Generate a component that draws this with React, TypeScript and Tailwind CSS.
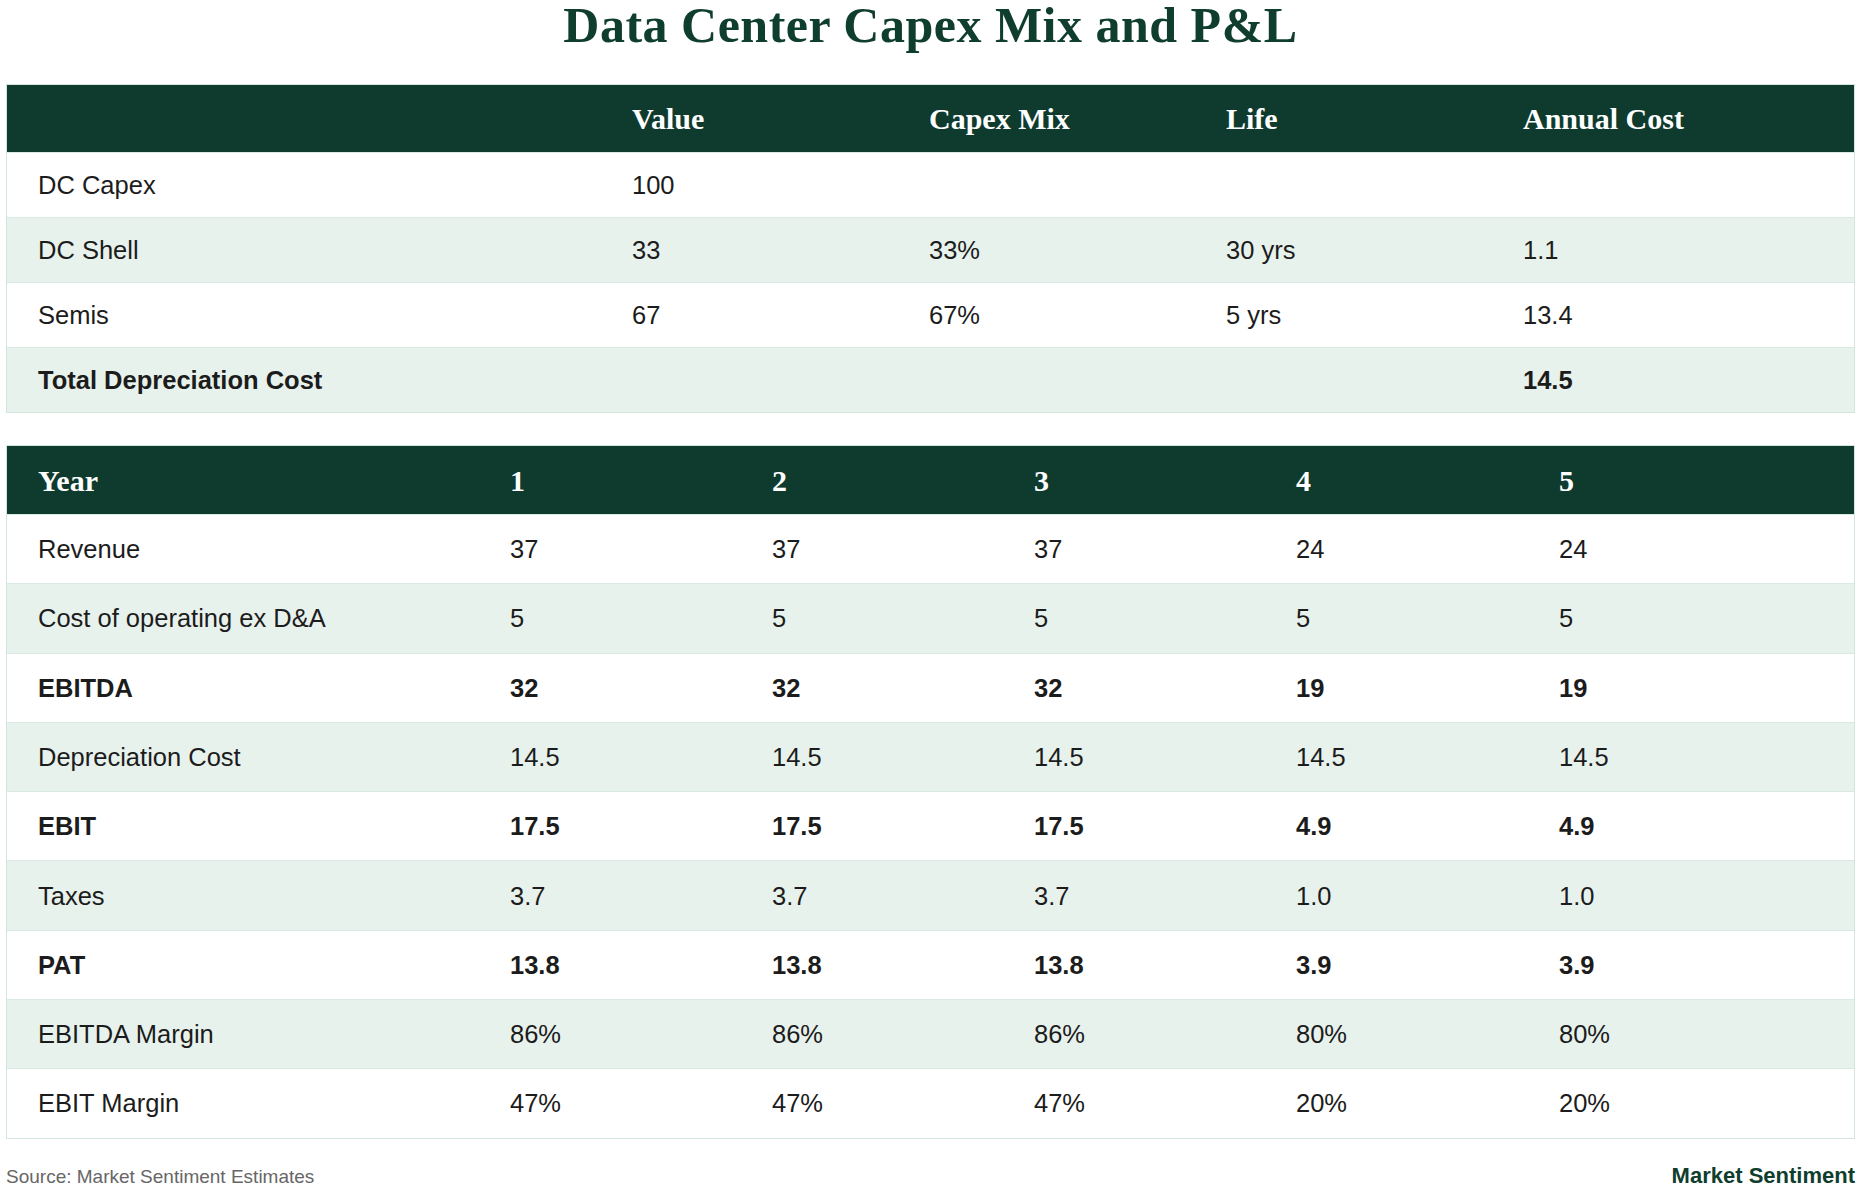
import React from "react";

type Row = { label: string; cells: string[]; bold?: boolean };

const capexCols = ["", "Value", "Capex Mix", "Life", "Annual Cost"];
const capexRows: Row[] = [
  { label: "DC Capex", cells: ["100", "", "", ""] },
  { label: "DC Shell", cells: ["33", "33%", "30 yrs", "1.1"] },
  { label: "Semis", cells: ["67", "67%", "5 yrs", "13.4"] },
  { label: "Total Depreciation Cost", cells: ["", "", "", "14.5"], bold: true },
];

const plCols = ["Year", "1", "2", "3", "4", "5"];
const plRows: Row[] = [
  { label: "Revenue", cells: ["37", "37", "37", "24", "24"] },
  { label: "Cost of operating ex D&A", cells: ["5", "5", "5", "5", "5"] },
  { label: "EBITDA", cells: ["32", "32", "32", "19", "19"], bold: true },
  { label: "Depreciation Cost", cells: ["14.5", "14.5", "14.5", "14.5", "14.5"] },
  { label: "EBIT", cells: ["17.5", "17.5", "17.5", "4.9", "4.9"], bold: true },
  { label: "Taxes", cells: ["3.7", "3.7", "3.7", "1.0", "1.0"] },
  { label: "PAT", cells: ["13.8", "13.8", "13.8", "3.9", "3.9"], bold: true },
  { label: "EBITDA Margin", cells: ["86%", "86%", "86%", "80%", "80%"] },
  { label: "EBIT Margin", cells: ["47%", "47%", "47%", "20%", "20%"] },
];

const serif = "font-['Liberation_Serif','Times_New_Roman',serif]";
const sans = "font-['Liberation_Sans',Arial,sans-serif]";

function DataTable({
  cols,
  rows,
  grid,
  headH,
  rowH,
}: {
  cols: string[];
  rows: Row[];
  grid: string;
  headH: string;
  rowH: string;
}) {
  return (
    <div className="w-full border border-[#d3e5de]">
      {/* Header */}
      <div className={`grid ${grid} ${headH} items-center bg-[#0f3b2f]`}>
        {cols.map((c, i) => (
          <div key={i} className={`pl-[31px] ${serif} text-[30px] font-bold text-white`}>
            {c}
          </div>
        ))}
      </div>
      {rows.map((r, ri) => (
        <div
          key={r.label}
          className={`grid ${grid} ${rowH} items-center border-t border-[#d9e9e3] ${
            ri % 2 === 1 ? "bg-[#e8f2ed]" : "bg-white"
          } ${sans} text-[25.5px] text-[#1c1c1c] ${r.bold ? "font-bold" : ""}`}
        >
          <div className="pl-[31px]">{r.label}</div>
          {r.cells.map((v, ci) => (
            <div key={ci} className="pl-[31px]">
              {v}
            </div>
          ))}
        </div>
      ))}
    </div>
  );
}

export default function App() {
  return (
    <div className="flex h-[1196px] w-[1864px] flex-col bg-white px-[6px] pr-[9px]">
      <h1 className={`${serif} text-center text-[50px] font-bold leading-[51px] tracking-[0.5px] text-[#0f3d2e]`}>
        Data Center Capex Mix and P&amp;L
      </h1>

      <div className="mt-[33px]">
        <DataTable
          cols={capexCols}
          rows={capexRows}
          grid="grid-cols-[594px_297px_297px_297px_1fr]"
          headH="h-[67px]"
          rowH="h-[65px]"
        />
      </div>

      <div className="mt-[32px]">
        <DataTable
          cols={plCols}
          rows={plRows}
          grid="grid-cols-[472px_262px_262px_262px_263px_1fr]"
          headH="h-[68px]"
          rowH="h-[69.3px]"
        />
      </div>

      <div className={`mt-[26px] flex items-baseline justify-between ${sans}`}>
        <span className="text-[19px] leading-[22px] text-[#666666]">Source: Market Sentiment Estimates</span>
        <span className="text-[22px] font-bold leading-[22px] text-[#0f3d2e]">Market Sentiment</span>
      </div>
    </div>
  );
}
